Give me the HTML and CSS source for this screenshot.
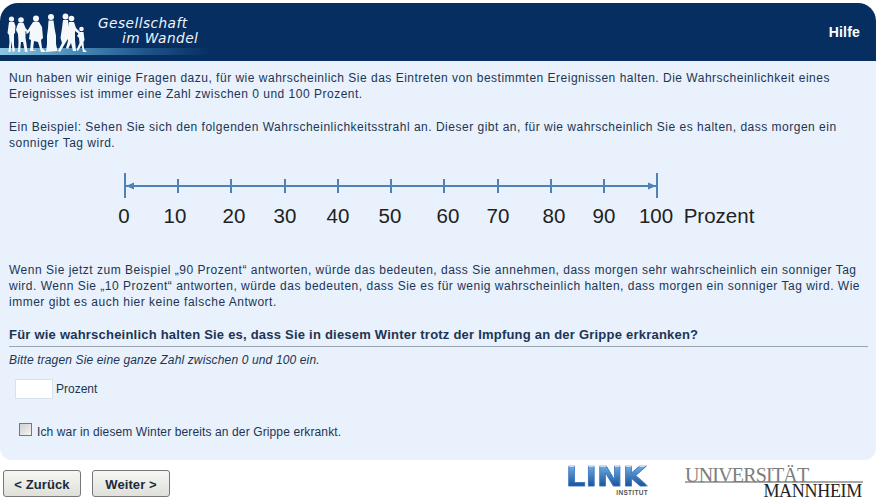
FILE: index.html
```html
<!DOCTYPE html>
<html lang="de">
<head>
    <meta charset="UTF-8">
    <meta name="viewport" content="width=device-width, initial-scale=1.0">
    <title>Gesellschaft im Wandel</title>
    <link rel="stylesheet" href="styles.css">
</head>

<body>
    <div class="page">
        <header class="kopf">
            <div class="logo">
                <div class="logo-streifen"></div>
                <svg class="leute" width="90" height="44" viewBox="0 11 90 44">
                    <g fill="#f4f8fb">
                        <!-- Mann links -->
                        <circle cx="11.500" cy="19" r="2.600"/>
                        <path d="M9 22 L14 22 L15.500 26 L15 33 L14 34 L14 45 L15 51 L12.500 52 L11.500 41 L10.500 52 L8.500 52 L9.500 42 L9 35 L7.500 33 Z"/>
                        <!-- Frau -->
                        <circle cx="21" cy="20" r="2.800"/>
                        <path d="M18.500 23 L23.500 23 L25.500 28 L29 32 L28 33 L25.500 31 L25.500 38 L26.500 44 L27.500 52 L25 52 L23 42 L21 42 L20 52 L18 52 L18.500 42 L18 34 L16 30 L17 26 Z"/>
                        <!-- Mann mit Mantel -->
                        <circle cx="36" cy="18.500" r="3"/>
                        <path d="M33 22 Q36 21 39 22 L42 27 L43 38 L41 40 L42 48 L46 52 L41 52 L38 42 L34 41 L33 50 L36 51 L30 51 L31 40 L29 39 L30 31 L27 34 L26 33 L31 25 Z"/>
                        <!-- Frau im Kleid -->
                        <circle cx="51" cy="17" r="3"/>
                        <path d="M48.500 20.500 L53.500 20.500 L54.500 28 L56 36 L56 44 L57.500 51 L46 52 L47 44 L47 36 L48 28 Z"/>
                        <!-- Paar -->
                        <circle cx="65.500" cy="16.500" r="2.900"/>
                        <path d="M63 20 L68 20 L69 30 L68.500 38 L66 42 L60 52 L58 51 L62 43 L60.500 38 L62 28 Z"/>
                        <circle cx="71.500" cy="18.500" r="2.800"/>
                        <path d="M69 22 L74 22 L76 28 L80 32 L79 34 L75 31 L75 40 L76 51 L73 51 L71 43 L68 49 L66 48 L68 41 L67 34 Z"/>
                        <!-- Kind -->
                        <circle cx="81.500" cy="29" r="2.300"/>
                        <path d="M79.500 32 L83.500 32 L84.500 40 L83.500 42 L84 49 L87 52 L83 52 L81.500 45 L78 51 L76.500 50 L79.500 43 L79 38 L77 36 Z"/>
                    </g>
                </svg>
                <div class="logo-text">
                    <span>Gesellschaft</span>
                    <span class="logo-zeile2">im Wandel</span>
                </div>
            </div>
            <a class="hilfe" href="#">Hilfe</a>
        </header>

        <main class="inhalt">
            <p class="absatz">Nun haben wir einige Fragen dazu, für wie wahrscheinlich Sie das Eintreten von bestimmten Ereignissen halten. Die Wahrscheinlichkeit eines Ereignisses ist immer eine Zahl zwischen 0 und 100 Prozent.</p>
            <p class="absatz">Ein Beispiel: Sehen Sie sich den folgenden Wahrscheinlichkeitsstrahl an. Dieser gibt an, für wie wahrscheinlich Sie es halten, dass morgen ein sonniger Tag wird.</p>

            <svg class="strahl" width="860" height="71" viewBox="0 0 860 71">
                <g stroke="#4f81b4" stroke-width="2">
                    <line x1="116" y1="18" x2="648" y2="18"/>
                    <line x1="116" y1="5" x2="116" y2="30"/>
                    <line x1="169" y1="11" x2="169" y2="25"/>
                    <line x1="222" y1="11" x2="222" y2="25"/>
                    <line x1="276" y1="11" x2="276" y2="25"/>
                    <line x1="329" y1="11" x2="329" y2="25"/>
                    <line x1="382" y1="11" x2="382" y2="25"/>
                    <line x1="435" y1="11" x2="435" y2="25"/>
                    <line x1="489" y1="11" x2="489" y2="25"/>
                    <line x1="542" y1="11" x2="542" y2="25"/>
                    <line x1="595" y1="11" x2="595" y2="25"/>
                    <line x1="648" y1="5" x2="648" y2="30"/>
                </g>
                <path d="M117 18 L125 14.500 L125 21.500 Z" fill="#4f81b4"/>
                <path d="M647 18 L639 14.500 L639 21.500 Z" fill="#4f81b4"/>
                <g class="strahl-zahlen" text-anchor="middle">
                    <text x="115" y="55">0</text>
                    <text x="166" y="55">10</text>
                    <text x="225" y="55">20</text>
                    <text x="276" y="55">30</text>
                    <text x="329" y="55">40</text>
                    <text x="381" y="55">50</text>
                    <text x="439" y="55">60</text>
                    <text x="489" y="55">70</text>
                    <text x="545" y="55">80</text>
                    <text x="595" y="55">90</text>
                    <text x="647" y="55">100</text>
                    <text x="710" y="55">Prozent</text>
                </g>
            </svg>

            <p class="absatz">Wenn Sie jetzt zum Beispiel „90 Prozent“ antworten, würde das bedeuten, dass Sie annehmen, dass morgen sehr wahrscheinlich ein sonniger Tag wird. Wenn Sie „10 Prozent“ antworten, würde das bedeuten, dass Sie es für wenig wahrscheinlich halten, dass morgen ein sonniger Tag wird. Wie immer gibt es auch hier keine falsche Antwort.</p>

            <h2 class="frage">Für wie wahrscheinlich halten Sie es, dass Sie in diesem Winter trotz der Impfung an der Grippe erkranken?</h2>
            <p class="hinweis">Bitte tragen Sie eine ganze Zahl zwischen 0 und 100 ein.</p>

            <div class="eingabe">
                <input class="zahl" type="text" id="zahl">
                <label for="zahl">Prozent</label>
            </div>
            <div class="auswahl">
                <input class="haken" type="checkbox" id="krank">
                <label for="krank">Ich war in diesem Winter bereits an der Grippe erkrankt.</label>
            </div>
        </main>

        <footer class="fuss">
            <div class="knoepfe">
                <button class="knopf" type="button">&lt; Zurück</button>
                <button class="knopf" type="button">Weiter &gt;</button>
            </div>
            <div class="link-logo">
                <span class="link-name">LINK</span>
                <span class="link-institut">INSTITUT</span>
            </div>
            <div class="uni-logo">
                <span class="uni-oben">UNIVERSITÄT</span>
                <span class="uni-unten">MANNHEIM</span>
            </div>
        </footer>
    </div>
</body>
</html>
```

FILE: styles.css
```css
body {
    margin: 0;
    background-color: white;
    font-family: "Liberation Sans", Arial, sans-serif;
    font-size: 12px;
    color: #1c3554;
}

.page {
    width: 876px;
    padding-top: 3px;
}

/* Kopf */
.kopf {
    height: 58px;
    background-color: #072e60;
    border-radius: 18px 18px 0 0;
    display: flex;
    justify-content: space-between;
    align-items: center;
    overflow: hidden;
}

.logo {
    position: relative;
    width: 300px;
    height: 58px;
    display: flex;
}

.logo-streifen {
    position: absolute;
    left: 0;
    top: 45px;
    width: 210px;
    height: 7px;
    background: linear-gradient(to right, #8cc6e2, #4d8cb8 35%, #1d5488 70%, #072e60);
}

.leute {
    position: absolute;
    left: 0;
    top: 8px;
}

.logo-text {
    position: absolute;
    left: 98px;
    top: 13px;
    display: flex;
    flex-direction: column;
    font-family: "DejaVu Sans", sans-serif;
    font-style: italic;
    font-size: 13.700px;
    line-height: 15px;
    letter-spacing: 0.45px;
    color: #eef4fa;
}

.logo-zeile2 {
    padding-left: 24px;
}

.hilfe {
    margin-right: 16px;
    font-size: 14px;
    font-weight: bold;
    letter-spacing: 0.2px;
    color: white;
    text-decoration: none;
}

/* Inhalt */
.inhalt {
    background-color: #e8f1fc;
    height: 399px;
    box-sizing: border-box;
    padding: 9px 8px 0 9px;
    border-radius: 0 0 12px 12px;
}

.absatz {
    margin: 0 0 17px 0;
    line-height: 16px;
    letter-spacing: 0.5px;
}

.strahl {
    display: block;
    margin: 2px 0 23px 0;
}

.strahl-zahlen {
    font-size: 20.500px;
    fill: #222;
}

.frage {
    margin: 0;
    padding: 0 0 3px 0;
    font-size: 13px;
    line-height: 16px;
    letter-spacing: 0.22px;
    border-bottom: 1px solid #9aa5b2;
}

.hinweis {
    margin: 5px 0 0 0;
    font-style: italic;
    line-height: 16px;
    letter-spacing: 0.14px;
}

.eingabe {
    display: flex;
    align-items: center;
    gap: 3px;
    margin: 11px 0 0 6px;
}

.zahl {
    width: 38px;
    height: 20px;
    box-sizing: border-box;
    padding: 0;
    border: 1px solid #d9e2ec;
    background-color: white;
}

.auswahl {
    display: flex;
    align-items: center;
    gap: 5px;
    margin: 24px 0 0 10px;
    letter-spacing: 0.12px;
}

.haken {
    appearance: none;
    width: 13px;
    height: 13px;
    margin: 0 0 4px 0;
    border: 1px solid #777;
    background: linear-gradient(135deg, #d0d0d0, #f4f4f4);
}

/* Fuss */
.fuss {
    height: 41px;
    display: flex;
    align-items: flex-start;
}

.knoepfe {
    display: flex;
    gap: 11px;
    margin: 10px 0 0 3px;
    width: 563px;
}

.knopf {
    width: 78px;
    height: 27px;
    padding: 1px 0 0 0;
    border: 1px solid #777;
    border-radius: 3px;
    background: linear-gradient(to bottom, #f6f6f4, #e0e0da);
    font-family: "Liberation Sans", Arial, sans-serif;
    font-size: 13px;
    font-weight: bold;
    letter-spacing: 0.1px;
    color: #1c2a3a;
}

.link-logo {
    width: 119px;
    margin-top: 7px;
    display: flex;
    flex-direction: column;
}

.link-name {
    width: 68px;
    font-family: "DejaVu Sans", sans-serif;
    font-size: 26px;
    line-height: 21px;
    font-weight: bold;
    transform: scaleX(1.18);
    transform-origin: left;
    -webkit-text-stroke: 0.6px #3c7cc4;
    color: transparent;
    background: linear-gradient(to bottom, #6aa6de, #124a96);
    -webkit-background-clip: text;
    background-clip: text;
}

.link-institut {
    width: 82px;
    margin-top: 2px;
    text-align: right;
    font-size: 6.500px;
    line-height: 6px;
    font-weight: bold;
    letter-spacing: 0.3px;
    color: #555;
}

.uni-logo {
    width: 178px;
    margin-top: 5px;
    display: flex;
    flex-direction: column;
    font-family: "Liberation Serif", serif;
}

.uni-oben {
    font-size: 20px;
    line-height: 20px;
    letter-spacing: -0.8px;
    color: #7d7d7d;
    border-bottom: 2px solid #a8a8a8;
    height: 16px;
    white-space: nowrap;
}

.uni-unten {
    font-size: 18px;
    line-height: 17px;
    letter-spacing: -0.3px;
    color: #222;
    text-align: right;
    padding-right: 1px;
}
```
